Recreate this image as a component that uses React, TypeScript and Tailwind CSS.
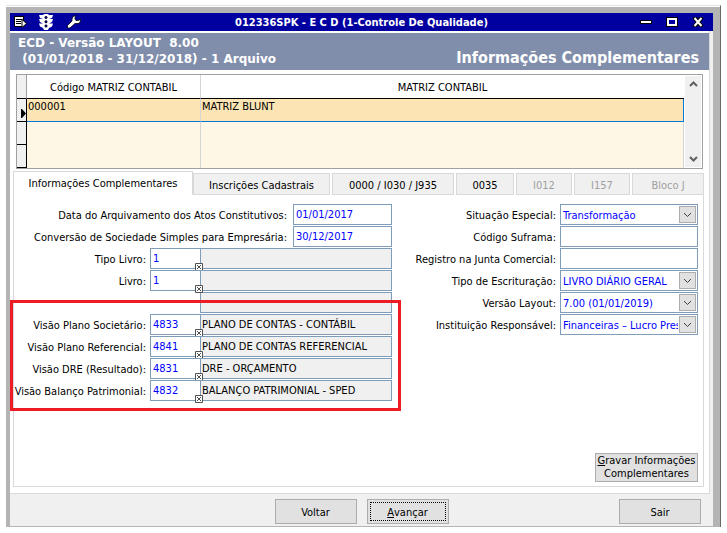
import { useState } from 'react';
import clsx from 'clsx';

const tabs = [
  { label: 'Informações Complementares', width: 'w-[180px]' },
  { label: 'Inscrições Cadastrais', width: 'w-[137px]' },
  { label: '0000 / I030 / J935', width: 'w-[122px]' },
  { label: '0035', width: 'w-[58px]' },
  { label: 'I012', width: 'w-[56px]', disabled: true },
  { label: 'I157', width: 'w-[56px]', disabled: true },
  { label: 'Bloco J', width: 'flex-1', disabled: true },
];

const dates = [
  { id: 'arquivamento', label: 'Data do Arquivamento dos Atos Constitutivos:', value: '01/01/2017' },
  { id: 'conversao', label: 'Conversão de Sociedade Simples para Empresária:', value: '30/12/2017' },
];

const books = [
  { id: 'tipo-livro', label: 'Tipo Livro:', code: '1', description: '' },
  { id: 'livro', label: 'Livro:', code: '1', description: '' },
];

const views = [
  { id: 'societario', label: 'Visão Plano Societário:', code: '4833', description: 'PLANO DE CONTAS - CONTÁBIL' },
  { id: 'referencial', label: 'Visão Plano Referencial:', code: '4841', description: 'PLANO DE CONTAS REFERENCIAL' },
  { id: 'dre', label: 'Visão DRE (Resultado):', code: '4831', description: 'DRE - ORÇAMENTO' },
  { id: 'balanco', label: 'Visão Balanço Patrimonial:', code: '4832', description: 'BALANÇO PATRIMONIAL - SPED' },
];

const details = [
  { id: 'situacao', label: 'Situação Especial:', option: 'Transformação' },
  { id: 'suframa', label: 'Código Suframa:' },
  { id: 'junta', label: 'Registro na Junta Comercial:' },
  { id: 'escrituracao', label: 'Tipo de Escrituração:', option: 'LIVRO DIÁRIO GERAL' },
  { id: 'versao', label: 'Versão Layout:', option: '7.00 (01/01/2019)' },
  { id: 'instituicao', label: 'Instituição Responsável:', option: 'Financeiras – Lucro Presumido' },
];

const fieldClass = 'h-[21px] border border-[#7f9db9] px-0.5 outline-none';
const buttonClass = 'border border-[#adadad] bg-[#e1e1e1] text-center';

const Chevron = ({ up = false, className = '' }: { up?: boolean; className?: string }) => (
  <svg viewBox="0 0 9 6" className={clsx('h-1.5 w-[9px]', className)} fill="none" stroke="currentColor">
    <path d={up ? 'M1 5 4.5 1.5 8 5' : 'M1 1 4.5 4.5 8 1'} />
  </svg>
);

const TitleBar = () => (
  <div className="grid h-[18px] grid-cols-[1fr_auto_1fr] items-center bg-[#0000a0] text-white">
    <div className="flex items-center gap-3 pl-1">
      <button aria-label="Menu">
        <svg viewBox="0 0 14 12" className="h-3 w-3.5">
          <path d="M.5.500h9v10h-9z" fill="#fff" stroke="#000" />
          <path d="M2 3.500h6M2 5.500h5M2 7.500h5" stroke="#000" />
          <path d="M8 3.500 12.500 7.500 8 11.500z" fill="#fff" stroke="#000" />
        </svg>
      </button>
      <button aria-label="Semáforo" className="-ml-px">
        <svg viewBox="0 0 14 16" className="h-4 w-3.5">
          <path d="M4 1l1-1h4l1 1h4l-1 3-3 1h4l-1 3-3 1.500h4l-1 3-3 1.500-1 2H5l-1-2-3-1.500-1-3h4L1 8 0 5h4L1 4 0 1z" fill="#fff" />
          <g fill="#0000a0" stroke="#000" strokeWidth=".6">
            <circle cx="7" cy="3.500" r="1.200" />
            <circle cx="7" cy="7.800" r="1.200" />
            <circle cx="7" cy="12" r="1.200" />
          </g>
        </svg>
      </button>
      <button aria-label="Ferramentas" className="ml-0.5">
        <svg viewBox="0 0 14 14" className="size-3.5">
          <path
            d="M9 .5 6 1.500 5 4v2L.5 10.500v2.500h2.500L8 8.500h3l2-1 .8-3-3 1H9L8 4V2.500z"
            fill="#fff"
            stroke="#000"
            strokeWidth=".8"
          />
        </svg>
      </button>
    </div>
    <h1 className="text-[11px] font-bold">012336SPK - E C D (1-Controle De Qualidade)</h1>
    <div className="flex items-center justify-end gap-3.5 pr-[9px]">
      <button aria-label="Minimizar">
        <svg viewBox="0 0 12 10" className="h-2.5 w-3">
          <path d="M.5 3.500h11v3H.5z" fill="#fff" stroke="#000" />
        </svg>
      </button>
      <button aria-label="Maximizar">
        <svg viewBox="0 0 12 10" className="h-2.5 w-3">
          <path d="M0 0h12v10H0z" />
          <path d="M2 2h8v6H2z" fill="#0000a0" stroke="#fff" strokeWidth="2" />
        </svg>
      </button>
      <button aria-label="Fechar">
        <svg viewBox="0 0 12 10" className="h-2.5 w-3" fill="none">
          <path d="m2 0 8 10M10 0 2 10" stroke="#000" strokeWidth="4" />
          <path d="m2.500 1 7 8M9.500 1l-7 8" stroke="#fff" strokeWidth="2" />
        </svg>
      </button>
    </div>
  </div>
);

const CompanyGrid = () => (
  <div className="mx-1.5 mt-1 flex border border-[#a0a0a0] bg-white">
    <table className="flex-1 table-fixed border-separate border-spacing-0 bg-[#fff7e6] text-left leading-[14px]">
      <thead>
        <tr className="h-6 bg-white">
          <th className="w-2.5 border-b border-r border-b-black border-r-[#a0a0a0] bg-[#f0f0f0]" />
          <th className="w-[174px] border-b border-r border-b-black border-r-[#d5d5d5] pt-0.5 text-center font-normal">
            Código MATRIZ CONTABIL
          </th>
          <th className="border-b border-black pt-0.5 text-center font-normal">MATRIZ CONTABIL</th>
        </tr>
      </thead>
      <tbody>
        <tr className="h-[23px] bg-[#fce4b4] align-top">
          <td className="border-b border-r border-black bg-[#f0f0f0] align-bottom">
            <svg viewBox="0 0 9 14" className="h-3.5 w-[9px]">
              <path d="M4 2v9h1l4-4.500L5 2z" />
            </svg>
          </td>
          <td className="border-b border-r border-b-[#0078d7] border-r-[#d5d5d5] pl-px pt-px">000001</td>
          <td className="border-b border-r border-[#0078d7] pl-px pt-px">MATRIZ BLUNT</td>
        </tr>
        <tr className="h-[23px]">
          <td className="border-b border-r border-black bg-[#f0f0f0]" />
          <td className="border-r border-[#d5d5d5]" />
          <td className="border-r border-[#d5d5d5]" />
        </tr>
        <tr className="h-[23px]">
          <td className="border-b border-r border-black bg-[#f0f0f0]" />
          <td className="border-r border-[#d5d5d5]" />
          <td className="border-r border-[#d5d5d5]" />
        </tr>
      </tbody>
    </table>
    <div className="m-px flex w-4 flex-col items-center justify-between bg-[#f0f0f0] text-[#606060]">
      <button aria-label="Rolar para cima" className="flex h-4 w-4 items-center justify-center">
        <Chevron up className="stroke-2" />
      </button>
      <button aria-label="Rolar para baixo" className="flex h-4 w-4 items-center justify-center">
        <Chevron className="stroke-2" />
      </button>
    </div>
  </div>
);

type CodeRowProps = { id: string; label: string; code: string; description: string };

const CodeRow = ({ id, label, code, description }: CodeRowProps) => (
  <div className="flex items-center">
    <label htmlFor={id} className="flex-1 pr-1 pt-px text-right">{label}</label>
    <div className="relative flex">
      <input id={id} defaultValue={code} className={clsx(fieldClass, 'w-[51px] bg-white text-[#0000ff]')} />
      <input
        aria-label={`${label} descrição`}
        readOnly
        defaultValue={description}
        className={clsx(fieldClass, '-ml-px w-[192px] bg-[#f0f0f0] px-px')}
      />
      <button aria-label={`Pesquisar ${label}`} className="absolute -bottom-0.5 left-[45px] size-2">
        <svg viewBox="0 0 8 8" className="size-2" stroke="#505050">
          <path d="M.5.5h7v7h-7z" fill="#fff" />
          <path d="m2 2 4 4M6 2 2 6" />
        </svg>
      </button>
    </div>
  </div>
);

const App = () => {
  const [active, setActive] = useState(0);

  return (
    <div className="bg-white px-1.5 pb-1 pt-[5px] font-['DejaVu_Sans_Condensed','DejaVu_Sans',sans-serif] text-[11px] leading-[13px] text-black">
      <div className="border-r border-t border-r-[#696969] border-t-[#e3e3e3] pt-px">
        <div className="border-b border-l-4 border-r-[7px] border-t-[6px] border-[#b4b4b4] bg-[#f0f0f0]">
          <TitleBar />

          <div className="mr-[3px] border-b border-r border-[#d9d9d9] bg-white pb-1.5 pt-0.5">
            <header className="flex h-[37px] items-end justify-between bg-[#808eab] px-2 pb-[3px] pr-2.5 font-bold text-white">
              <p className="whitespace-pre font-['DejaVu_Sans',sans-serif] text-[12px] leading-4">
                {'ECD - Versão LAYOUT  8.00\n (01/01/2018 - 31/12/2018) - 1 Arquivo'}
              </p>
              <h2 className="text-[16px] leading-[18px]">Informações Complementares</h2>
            </header>

            <CompanyGrid />

            <div role="tablist" className="ml-[3px] mr-[5px] mt-0.5 flex h-6 items-end">
              {tabs.map((tab, i) => (
                <button
                  key={tab.label}
                  role="tab"
                  aria-selected={i === active}
                  disabled={tab.disabled}
                  onClick={() => setActive(i)}
                  className={clsx(
                    'border border-[#d9d9d9]',
                    tab.width,
                    i === active ? 'h-6 border-b-white bg-white' : 'h-[22px] bg-[#f0f0f0] pt-0.5',
                    i > 1 && 'ml-0.5',
                    tab.disabled && 'text-[#a0a0a0]'
                  )}
                >
                  {tab.label}
                </button>
              ))}
            </div>

            <form className="ml-[3px] mr-[5px] border border-t-0 border-[#d9d9d9] pb-1 pr-[5px] pt-[9px]">
              <div className="grid grid-cols-[21fr_17fr]">
                <div className="flex flex-col gap-px">
                  {dates.map((date) => (
                    <div key={date.id} className="flex items-center">
                      <label htmlFor={date.id} className="flex-1 pr-1.5 pt-px text-right">{date.label}</label>
                      <input
                        id={date.id}
                        defaultValue={date.value}
                        className={clsx(fieldClass, 'w-[99px] text-[#0000ff]')}
                      />
                    </div>
                  ))}
                  {books.map((book) => <CodeRow key={book.id} {...book} />)}
                  <input
                    aria-label="Descrição do livro"
                    readOnly
                    className={clsx(fieldClass, 'w-[192px] self-end bg-[#f0f0f0]')}
                  />
                  <div className="relative flex flex-col gap-px">
                    {views.map((view) => <CodeRow key={view.id} {...view} />)}
                    <div className="pointer-events-none absolute -bottom-2.5 -left-1 -right-[9px] -top-3.5 border-[3px] border-[#ed1c24]" />
                  </div>
                </div>

                <div className="flex flex-col gap-px">
                  {details.map(({ id, label, option }) => (
                    <div key={id} className="flex items-center">
                      <label htmlFor={id} className="flex-1 pr-1 pt-px text-right">{label}</label>
                      {option ? (
                        <div className="relative w-[138px]">
                          <select id={id} className={clsx(fieldClass, 'w-full appearance-none pr-[19px] pt-px text-[#0000ff]')}>
                            <option>{option}</option>
                          </select>
                          <span className="pointer-events-none absolute bottom-0.5 right-0.5 top-0.5 flex w-[17px] items-center justify-center border border-[#adadad] bg-[#e1e1e1] text-[#404040]">
                            <Chevron />
                          </span>
                        </div>
                      ) : (
                        <input id={id} className={clsx(fieldClass, 'w-[138px] text-[#0000ff]')} />
                      )}
                    </div>
                  ))}
                </div>
              </div>

              <div className="mt-[52px] flex justify-end">
                <button type="button" className={clsx(buttonClass, 'h-[29px] w-[103px] pb-0.5')}>
                  <u>G</u>ravar Informações Complementares
                </button>
              </div>
            </form>
          </div>

          <footer className="grid grid-cols-[1fr_auto_1fr] pb-0.5 pt-[5px]">
            <div className="col-start-2 flex gap-2.5">
              <button className={clsx(buttonClass, 'h-[25px] w-[82px] pt-0.5')}>Voltar</button>
              <button className={clsx(buttonClass, 'h-[25px] w-[82px] p-0.5')}>
                <span className="flex h-full items-center justify-center border border-dotted border-black pt-0.5">
                  <u>A</u>vançar
                </span>
              </button>
            </div>
            <button className={clsx(buttonClass, 'mr-3 h-[25px] w-[82px] justify-self-end pt-0.5')}>Sair</button>
          </footer>
        </div>
      </div>
    </div>
  );
};

export default App;
